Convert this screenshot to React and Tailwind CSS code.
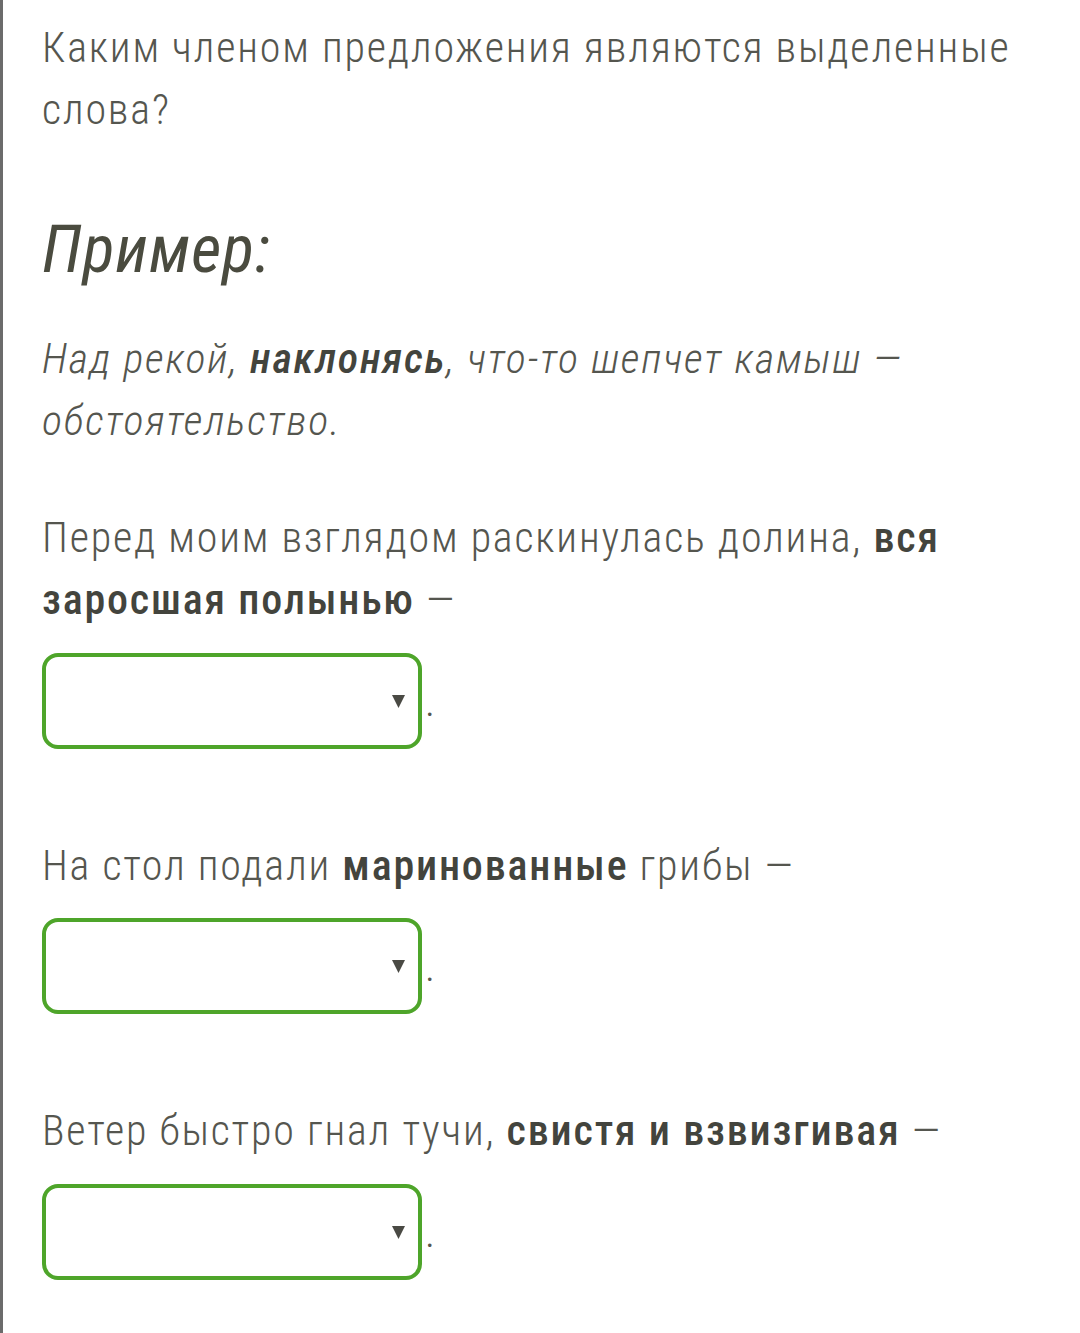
import React from 'react';

function Select() {
  return (
    <div className="flex items-end">
      <div className="w-[380px] h-[96px] border-4 border-[#4ea52a] rounded-[16px] bg-white flex items-center justify-end pr-[13px]">
        <svg width="13" height="14" viewBox="0 0 13 14">
          <path d="M0 1 L13 1 L6.5 14 Z" fill="#4a4a44" />
        </svg>
      </div>
      <span className="ml-[3px] mb-[26px] text-[42px] leading-[42px]">.</span>
    </div>
  );
}

function B({ children }) {
  return <span className="font-medium text-[#43443d]">{children}</span>;
}

export default function App() {
  return (
    <div className="min-h-[1333px] bg-white border-l-[3px] border-[#6b6b6b] pl-[39px] pt-[17px] text-[#55564f] font-light [font-stretch:condensed] tracking-[1.8px]" style={{ fontFamily: 'Roboto, "Noto Sans", sans-serif' }}>
      <p className="text-[42px] leading-[62px]">
        Каким членом предложения являются выделенные
        <br />
        слова?
      </p>

      <h2 className="mt-[69px] text-[66px] leading-[79px] italic font-normal text-[#4a4b3f] tracking-[1px]">Пример:</h2>

      <p className="mt-[39px] text-[42px] leading-[62px] italic">
        Над рекой, <span className="font-medium text-[#43443d]">наклонясь</span>, что-то шепчет камыш —
        <br />
        обстоятельство.
      </p>

      <div className="mt-[55px]">
        <p className="text-[42px] leading-[62px]">
          Перед моим взглядом раскинулась долина, <B>вся</B>
          <br />
          <B>заросшая полынью</B> —
        </p>
        <div className="mt-[22px]">
          <Select />
        </div>
      </div>

      <div className="mt-[86px]">
        <p className="text-[42px] leading-[62px]">
          На стол подали <B>маринованные</B> грибы —
        </p>
        <div className="mt-[21px]">
          <Select />
        </div>
      </div>

      <div className="mt-[86px]">
        <p className="text-[42px] leading-[62px]">
          Ветер быстро гнал тучи, <B>свистя и взвизгивая</B> —
        </p>
        <div className="mt-[22px]">
          <Select />
        </div>
      </div>
    </div>
  );
}
